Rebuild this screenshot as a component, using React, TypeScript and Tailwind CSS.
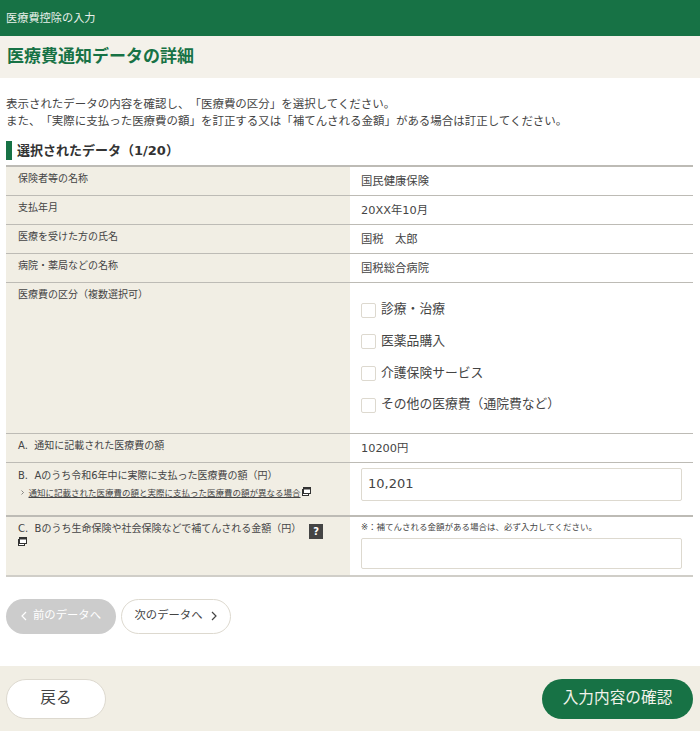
const font = { fontFamily: '"DejaVu Sans", "Noto Sans CJK JP", "Liberation Sans", sans-serif' };

function WindowIcon() {
  return (
    <svg width="9" height="9" viewBox="0 0 9 9" className="inline-block shrink-0">
      <rect x="0.5" y="2.5" width="6" height="6" fill="#fff" stroke="#333" strokeWidth="1" />
      <rect x="1.5" y="0.5" width="7" height="6" fill="#fff" stroke="#333" strokeWidth="1" />
      <rect x="1.5" y="0.5" width="7" height="2" fill="#333" />
    </svg>
  );
}

function Chevron({ dir, color, small }: { dir: 'left' | 'right'; color: string; small?: boolean }) {
  return (
    <svg
      width={small ? 3 : 6}
      height={small ? 5 : 10}
      viewBox="0 0 6 10"
      fill="none"
      stroke={color}
      strokeWidth="1.2"
      className="shrink-0"
    >
      <path d={dir === 'left' ? 'M5 1L1 5l4 4' : 'M1 1l4 4-4 4'} />
    </svg>
  );
}

function Row({ label, value }: { label: string; value: string }) {
  return (
    <div className="flex h-[29px] border-b border-[#bdbbb5]">
      <div className="w-[344px] bg-[#f1eee4] pl-[12px] pt-[4.5px] text-[10px] leading-[14px] text-[#444]">{label}</div>
      <div className="flex-1 pl-[11px] pt-[5.5px] text-[11.33px] leading-[16px] text-[#444]">{value}</div>
    </div>
  );
}

function Check({ label }: { label: string }) {
  return (
    <label className="flex h-[31.67px] items-center gap-[6px]">
      <span className="mt-[2px] h-[15px] w-[15px] rounded-[2px] border border-[#ddd9cf] bg-white" />
      <span className="-ml-[1px] text-[12.8px] leading-[18px] text-[#444]">{label}</span>
    </label>
  );
}

export default function App() {
  return (
    <div className="h-[731px] w-[700px] overflow-hidden bg-white [text-spacing-trim:space-all]" style={font}>
      <header className="h-[36px] bg-[#177245] pl-[6px] pt-[11px] text-[11.2px] leading-[16px] text-[#e8f0ea]">
        医療費控除の入力
      </header>
      <div className="h-[42px] bg-[#f4f1ea] pl-[7px] pt-[9px] text-[17px] font-bold leading-[22px] text-[#177245]">
        医療費通知データの詳細
      </div>

      <div className="px-[6px]">
        <p className="mt-[17.5px] text-[11.47px] leading-[17px] text-[#444]">
          表示されたデータの内容を確認し、「医療費の区分」を選択してください。
          <br />
          また、「実際に支払った医療費の額」を訂正する又は「補てんされる金額」がある場合は訂正してください。
        </p>

        <h2 className="mt-[11.5px] h-[19px] border-l-[6px] border-[#177245] pl-[5px] text-[13px] font-bold leading-[20px] text-[#333]">
          選択されたデータ（1/20）
        </h2>

        <div className="mt-[5px] w-[687px] border-t-2 border-[#bdbbb5]">
          <Row label="保険者等の名称" value="国民健康保険" />
          <Row label="支払年月" value="20XX年10月" />
          <Row label="医療を受けた方の氏名" value="国税　太郎" />
          <Row label="病院・薬局などの名称" value="国税総合病院" />

          <div className="flex h-[151px] border-b border-[#bdbbb5]">
            <div className="w-[344px] bg-[#f1eee4] pl-[12px] pt-[4.5px] text-[10px] leading-[14px] text-[#444]">
              医療費の区分（複数選択可）
            </div>
            <div className="flex-1 pl-[11px] pt-[10.5px]">
              <Check label="診療・治療" />
              <Check label="医薬品購入" />
              <Check label="介護保険サービス" />
              <Check label="その他の医療費（通院費など）" />
            </div>
          </div>

          <Row label={'A.\u00a0\u00a0通知に記載された医療費の額'} value="10200円" />

          <div className="flex h-[54px] border-b-2 border-[#bdbbb5]">
            <div className="w-[344px] bg-[#f1eee4] pl-[12px] pt-[4.5px] text-[10px] leading-[16px] text-[#444]">
              <div>{'B.\u00a0\u00a0Aのうち令和6年中に実際に支払った医療費の額（円）'}</div>
              <div className="mt-[2px] flex items-center text-[8.5px] leading-[14px]">
                <span className="ml-[3px] mr-[4.5px] flex">
                  <Chevron dir="right" color="#444" small />
                </span>
                <span className="underline">通知に記載された医療費の額と実際に支払った医療費の額が異なる場合</span>
                <span className="ml-[1px] -mt-[2px] flex">
                  <WindowIcon />
                </span>
              </div>
            </div>
            <div className="flex-1 pl-[11px] pt-[5px]">
              <input
                readOnly
                value="10,201"
                className="h-[33px] w-[321px] rounded-[2px] border border-[#ddd9cf] bg-white px-[6px] pb-[2px] text-[13px] text-[#444] outline-none"
              />
            </div>
          </div>

          <div className="flex h-[60px] border-b-2 border-[#d0cec8]">
            <div className="w-[344px] bg-[#f1eee4] pl-[12px] pt-[4px] text-[10px] leading-[16px] text-[#444]">
              <div className="flex items-start">
                <span>{'C.\u00a0\u00a0Bのうち生命保険や社会保険などで補てんされる金額（円）'}</span>
                <span className="ml-[8px] mt-[3px] flex h-[15px] w-[14px] items-center justify-center bg-[#444] text-[10px] font-bold text-white">
                  ?
                </span>
              </div>
              <div className="-mt-[2px] flex">
                <WindowIcon />
              </div>
            </div>
            <div className="flex-1 pl-[11px] pt-[3px]">
              <div className="text-[8.5px] leading-[14px] text-[#444]">※：補てんされる金額がある場合は、必ず入力してください。</div>
              <input
                readOnly
                className="mt-[4px] block h-[31px] w-[321px] rounded-[2px] border border-[#ddd9cf] bg-white outline-none"
              />
            </div>
          </div>
        </div>

        <div className="mt-[22px] flex gap-[5px]">
          <button className="flex h-[35px] w-[110px] items-center justify-center gap-[6px] rounded-full bg-[#cccccc] pb-[2px] text-[11.33px] text-white">
            <Chevron dir="left" color="#fff" />
            前のデータへ
          </button>
          <button className="flex h-[35px] w-[110px] items-center justify-center gap-[9px] rounded-full border border-[#ddd9cf] bg-white pb-[2px] text-[11.33px] text-[#444]">
            次のデータへ
            <Chevron dir="right" color="#444" />
          </button>
        </div>
      </div>

      <footer className="mt-[32px] flex h-[65px] items-start justify-between bg-[#f1eee4] pl-[6px] pr-[7px] pt-[13px]">
        <button className="h-[40px] w-[100px] rounded-full border border-[#ddd9cf] bg-white pb-[3px] text-[15.67px] text-[#444]">戻る</button>
        <button className="h-[40px] w-[151px] rounded-full bg-[#177245] pb-[3px] text-[15.67px] text-[#f2f2ea]">入力内容の確認</button>
      </footer>
    </div>
  );
}
